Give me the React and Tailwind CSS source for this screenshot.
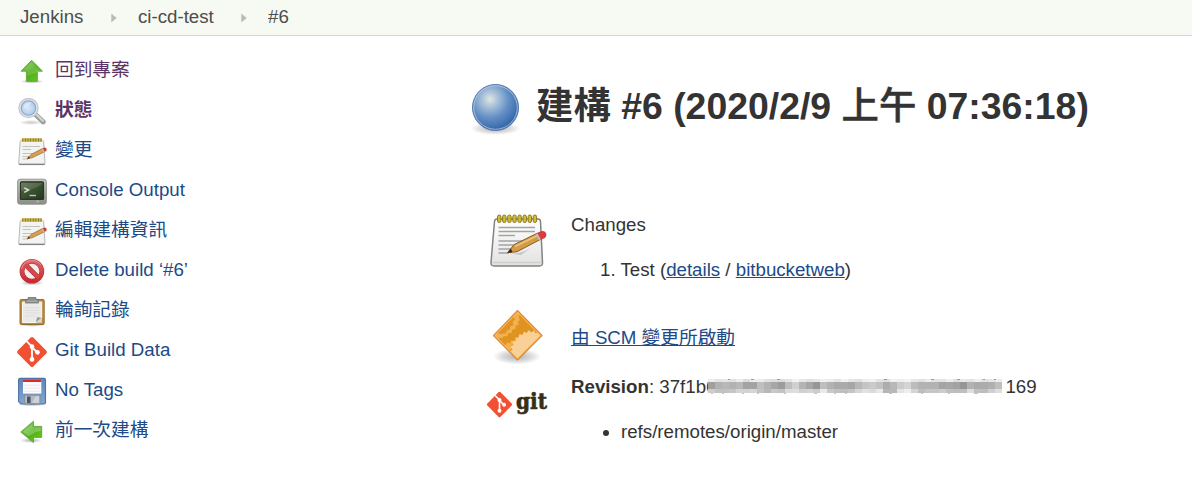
import React from "react";

function Defs() {
  return (
    <svg width="0" height="0" className="absolute">
      <defs>
        <linearGradient id="green" x1="0" y1="0" x2="1" y2="1">
          <stop offset="0" stopColor="#8fd65a" />
          <stop offset="0.5" stopColor="#4fae1c" />
          <stop offset="1" stopColor="#6bcb18" />
        </linearGradient>
        <linearGradient id="paper" x1="0" y1="0" x2="0" y2="1">
          <stop offset="0" stopColor="#ffffff" />
          <stop offset="1" stopColor="#e2e2e2" />
        </linearGradient>
        <linearGradient id="metal" x1="0" y1="0" x2="0" y2="1">
          <stop offset="0" stopColor="#c4c6c1" />
          <stop offset="1" stopColor="#8c8e88" />
        </linearGradient>
        <linearGradient id="screen" x1="0" y1="0" x2="1" y2="1">
          <stop offset="0" stopColor="#5a6e4c" />
          <stop offset="0.5" stopColor="#3a5132" />
          <stop offset="1" stopColor="#22361d" />
        </linearGradient>
        <linearGradient id="red" x1="0" y1="0" x2="0" y2="1">
          <stop offset="0" stopColor="#e06264" />
          <stop offset="1" stopColor="#cc2a2e" />
        </linearGradient>
        <linearGradient id="floppy" x1="0" y1="0" x2="0" y2="1">
          <stop offset="0" stopColor="#5c87bd" />
          <stop offset="1" stopColor="#84a6d0" />
        </linearGradient>
        <radialGradient id="glass" cx="0.45" cy="0.5" r="0.6">
          <stop offset="0" stopColor="#dbe8f6" />
          <stop offset="1" stopColor="#a9c6e8" />
        </radialGradient>
        <radialGradient id="ball" cx="0.38" cy="0.32" r="0.68">
          <stop offset="0" stopColor="#e2e6de" />
          <stop offset="0.2" stopColor="#b4c8dc" />
          <stop offset="0.6" stopColor="#638fc6" />
          <stop offset="1" stopColor="#3466a8" />
        </radialGradient>
        <radialGradient id="shadow">
          <stop offset="0" stopColor="#000" stopOpacity="0.3" />
          <stop offset="0.6" stopColor="#000" stopOpacity="0.14" />
          <stop offset="1" stopColor="#000" stopOpacity="0" />
        </radialGradient>
      </defs>
    </svg>
  );
}

function UpIcon() {
  return (
    <svg viewBox="0 0 32 32" className="size-8">
      <ellipse cx="16" cy="25.500" rx="12" ry="2" fill="url(#shadow)" />
      <path d="M15.700 4.300 26.500 15.200H21.400V25.300H10.400V15.200H5Z" fill="url(#green)" stroke="#5fa83a" strokeWidth="0.900" strokeLinejoin="round" />
      <path d="M15.700 6.200 7.800 14.300H11.400V20C15 19 18 17 22 16.500L23.800 14.300Z" fill="#fff" opacity="0.150" />
    </svg>
  );
}

function BackIcon() {
  return (
    <svg viewBox="0 0 32 32" className="size-8">
      <ellipse cx="15" cy="24.500" rx="11" ry="2.500" fill="url(#shadow)" />
      <path d="M4.800 16 17.500 5.200V10.400H25.700V21.400H17.500V26.600Z" fill="url(#green)" stroke="#5fa83a" strokeWidth="0.900" strokeLinejoin="round" />
      <path d="M7 15.500 16.600 7.400V11.300H24.800V15C18 15 17 19 12 20Z" fill="#fff" opacity="0.250" />
    </svg>
  );
}

function SearchIcon() {
  return (
    <svg viewBox="0 0 32 32" className="size-8">
      <ellipse cx="15" cy="26.500" rx="12" ry="2.500" fill="url(#shadow)" opacity="0.700" />
      <path d="M20 19 27.300 25.800" stroke="#999b9d" strokeWidth="5" strokeLinecap="round" />
      <path d="M20.500 18.600 27 24.800" stroke="#d0d1d2" strokeWidth="2.400" strokeLinecap="round" />
      <circle cx="12.500" cy="12" r="9.500" fill="#e9ecee" stroke="#c6c8c9" strokeWidth="1.400" />
      <circle cx="12.500" cy="12" r="7.300" fill="url(#glass)" stroke="#83a5cf" strokeWidth="1.100" />
      <path d="M7.400 12.500C7 8 11 5.500 15.500 7 13 10 10 12 7.400 12.500Z" fill="#fff" opacity="0.350" />
    </svg>
  );
}

function LargePad() {
  return (
    <svg viewBox="0 0 60 60" className="size-[60px]">
      <path d="M7.500 12.500Q7.700 10 10 10H51Q53.400 10 53.500 12.500L55.500 53.500Q55.600 57 52.500 57H7Q3.800 57 4 53.500Z" fill="url(#paper)" stroke="#83847f" strokeWidth="1.500" strokeLinejoin="round" />
      <path d="M5.500 53.500H54.500" stroke="#cfcfcc" strokeWidth="1.400" />
      <g stroke="#a3a3a1" strokeWidth="1.300">
        <path d="M11.500 18.500H48M11.500 22.500H48M11.500 26.500H28M11.500 32H47M11.500 36H42M11.500 40H35M11.500 44H22" />
      </g>
      <g fill="#d5bb32" stroke="#81701a" strokeWidth="0.900">
        <rect x="10.500" y="6" width="3.400" height="7.500" rx="1.600" />
        <rect x="15.600" y="6" width="3.400" height="7.500" rx="1.600" />
        <rect x="20.700" y="6" width="3.400" height="7.500" rx="1.600" />
        <rect x="25.800" y="6" width="3.400" height="7.500" rx="1.600" />
        <rect x="30.900" y="6" width="3.400" height="7.500" rx="1.600" />
        <rect x="36" y="6" width="3.400" height="7.500" rx="1.600" />
        <rect x="41.100" y="6" width="3.400" height="7.500" rx="1.600" />
        <rect x="46.200" y="6" width="3.400" height="7.500" rx="1.600" />
      </g>
      <path d="M23 44.500Q38 45 50 35L34 46Z" fill="#777" opacity="0.300" />
      <path d="M20.500 43.700 27 35.700 50 24.300 53.300 30.500 30 42.700Z" fill="#d59a48" stroke="#7d5320" strokeWidth="0.900" strokeLinejoin="round" />
      <path d="M28 37.500 50.500 26.500" stroke="#efc47c" strokeWidth="1.500" />
      <path d="M20.500 43.700 24 39.400 25.300 43.200Z" fill="#312619" />
      <path d="M50 24.300 55 22.500Q58.800 22 59 26L58 28.500 53.300 30.500Z" fill="#e53935" stroke="#b32322" strokeWidth="0.700" />
      <path d="M48.500 25.200 50.500 24.200 53.900 30.200 51.900 31.200Z" fill="#bcbcbc" />
    </svg>
  );
}

function NotepadIcon() {
  return (
    <svg viewBox="0 0 32 32" className="size-8">
      <path d="M4.200 5.500Q4.300 4.500 5.300 4.500H26.500Q27.500 4.500 27.600 5.500L29 27.200Q29 28.700 27.600 28.700H4Q2.600 28.700 2.700 27.200Z" fill="#f3f3f2" stroke="#b0b1ae" strokeWidth="0.900" />
      <path d="M3 28.300H28.700" stroke="#7f807d" strokeWidth="1.300" />
      <path d="M6.500 10.500H24M6.500 13.500H15M6.500 17.500H23M6.500 20.500H17M6.500 23H12" stroke="#bcbcba" strokeWidth="0.900" />
      <path d="M5.800 4H25.800" stroke="#c6ae3e" strokeWidth="3.400" />
      <path d="M6.500 4H25.800" stroke="#85762c" strokeWidth="3.400" strokeDasharray="0.700 1.900" />
      <path d="M11 22.700 15 18.500 26.500 12.500 28.500 15.800 16 21.800Z" fill="#d9a054" stroke="#93662f" strokeWidth="0.700" />
      <path d="M11 22.700 13 20.600 13.800 22.200Z" fill="#3a2c1a" />
      <path d="M26.600 12.300 28.500 11.600Q30.700 11.600 30.800 13.700L30.200 15 28.600 15.900Z" fill="#dc3b35" />
      <path d="m25.700 12.900 1-.5 2 3.500-1 .5Z" fill="#c4c4c4" />
    </svg>
  );
}

function TerminalIcon() {
  return (
    <svg viewBox="0 0 32 32" className="size-8">
      <rect x="1.600" y="3.200" width="28.800" height="25" rx="2.500" fill="url(#metal)" stroke="#8c8e87" strokeWidth="0.900" />
      <rect x="4.500" y="5.800" width="23" height="17.600" rx="1" fill="url(#screen)" stroke="#2b3227" strokeWidth="1.200" />
      <path d="M5 14C12 16 21 12 27 7H5Z" fill="#fff" opacity="0.130" />
      <path d="m8.300 11.800 4.200 2.300-4.200 2.300" fill="none" stroke="#dbe3d5" strokeWidth="1.500" />
      <path d="M13.500 19.500H20" stroke="#bdc9b6" strokeWidth="1.400" />
      <circle cx="21.800" cy="25.500" r="0.900" fill="#b4e04c" />
    </svg>
  );
}

function StopIcon() {
  return (
    <svg viewBox="0 0 32 32" className="size-8">
      <ellipse cx="16" cy="27" rx="12" ry="2.500" fill="url(#shadow)" />
      <circle cx="15.900" cy="15.200" r="9.900" fill="#f3efee" stroke="#b8383b" strokeWidth="4.800" />
      <path d="m9.500 8.700 13 13" stroke="#b8383b" strokeWidth="4.800" />
      <circle cx="15.900" cy="15.200" r="9.900" fill="none" stroke="url(#red)" strokeWidth="3.600" />
      <path d="m9.500 8.700 13 13" stroke="#d4474a" strokeWidth="3.600" />
      <path d="M5.500 13A11 11 0 0 1 25 9" fill="none" stroke="#fff" opacity="0.300" strokeWidth="1" />
    </svg>
  );
}

function ClipboardIcon() {
  return (
    <svg viewBox="0 0 32 32" className="size-8">
      <ellipse cx="16" cy="29" rx="13" ry="1.800" fill="url(#shadow)" />
      <rect x="4" y="3.500" width="24.200" height="25" rx="1.200" fill="#bd8b3d" stroke="#8c6425" strokeWidth="0.900" />
      <path d="M6.500 6H25.700V22L20.500 26.500H6.500Z" fill="#eaeae9" stroke="#fafafa" strokeWidth="0.900" />
      <path d="M9 11.500H23M9 14.300H23M9 17H23M9 20H19" stroke="#dddddc" strokeWidth="1" />
      <path d="m25.500 21.700-5.500 4.800 1-5.300Z" fill="#989997" />
      <path d="M20 26.800H25.800V21.700Z" fill="#d8d8d7" />
      <path d="M9.500 7V4.700L12 3.200V1.500H20V3.200L22.500 4.700V7Z" fill="#8d908b" stroke="#747773" strokeWidth="0.800" />
      <path d="M10.500 5.200H21.500" stroke="#b7b9b5" strokeWidth="0.900" />
    </svg>
  );
}

function GitMark({ className }) {
  return (
    <svg viewBox="0 0 32 32" className={className}>
      <path d="M14.700 1.600Q16 .4 17.300 1.600L30.400 14.700Q31.600 16 30.400 17.300L17.300 30.400Q16 31.600 14.700 30.400L1.600 17.300Q.4 16 1.600 14.700Z" fill="#f05133" />
      <path d="m10.800 5.400 5.200 5.200V24M16 11.200 21.300 16.500" fill="none" stroke="#fff" strokeWidth="1.900" />
      <circle cx="16" cy="10.700" r="2.350" fill="#fff" />
      <circle cx="21.500" cy="16.300" r="2.350" fill="#fff" />
      <circle cx="16" cy="23.400" r="2.350" fill="#fff" />
    </svg>
  );
}

function GitIcon() {
  return <GitMark className="size-8" />;
}

function FloppyIcon() {
  return (
    <svg viewBox="0 0 32 32" className="size-8">
      <ellipse cx="16" cy="28.500" rx="14" ry="1.800" fill="url(#shadow)" />
      <path d="M2.600 3.800Q2.600 2.400 4 2.400H28Q29.500 2.400 29.500 3.800V26.500Q29.500 28 28 28H5L2.600 25.600Z" fill="url(#floppy)" stroke="#4d73a6" strokeWidth="1.100" />
      <rect x="7" y="3.600" width="18.300" height="14" fill="#fbfbfc" />
      <rect x="7" y="3.400" width="18.300" height="2.600" fill="#dc2b27" />
      <path d="M8 9.200H24M8 12.200H24M8 15.200H24" stroke="#e6e7ea" strokeWidth="0.900" />
      <rect x="8.500" y="19.200" width="15.500" height="8.500" fill="#b7bbbf" stroke="#7b8b9b" strokeWidth="0.800" />
      <rect x="11" y="20.500" width="3.600" height="6.500" fill="#4c5560" />
      <path d="m16 27 4-7h3v7Z" fill="#d9dbdd" opacity="0.700" />
    </svg>
  );
}

function BallIcon() {
  return (
    <svg viewBox="0 0 64 64" className="size-16">
      <ellipse cx="31.500" cy="50.500" rx="25" ry="6.500" fill="url(#shadow)" />
      <circle cx="31.500" cy="29.500" r="23" fill="url(#ball)" stroke="#5377aa" strokeWidth="1" />
      <circle cx="31.500" cy="29.500" r="21.800" fill="none" stroke="#b5cbe6" strokeWidth="1" opacity="0.800" />
    </svg>
  );
}

function GearDiamondIcon() {
  return (
    <svg viewBox="0 0 60 60" className="size-[60px]">
      <ellipse cx="30" cy="49.500" rx="24" ry="8" fill="url(#shadow)" />
      <path d="M30.500 3.500 55 28.500 30.500 53 6.500 28.500Z" fill="#e0931f" />
      <path d="M25.500 8.500 30.500 3.500 33.500 6.500 31.500 10 33 13 31 14.500 31.500 18 28.500 18.500 28.500 22 25.500 22.500 24.500 26 21.500 26 20 29.500 17 29 15 31.500 12.500 30.500 10.500 32.500 6.500 28.500 9 26Q22 24 25.500 8.500Z" fill="#f3b04e" />
      <path d="M25.500 9 9.500 25.800Q13 28 16 26.500L19 26.500 19.500 23.500 23 22.500 23 19.500 26.500 18 25.500 15 28 12.500Z" fill="#e0931f" />
      <path d="M17.500 39.500 20 35.500 23 36.500 24 33.500 27.500 33.500 27 37 24 38.500 25 42 21.500 43.500Z" fill="#f3b04e" />
      <path d="M54.500 28.500 30.500 52.500 23 44.500 25.500 42.500 23.500 39.500 26.500 38 25.500 34.500 28.500 34 28.500 30.500 31.500 30.500 32.500 27 35.500 28 37 24.500 39.500 26 42 23 44 25.500 47 23.500 48.500 26.500 51 25Z" fill="#f9d196" />
      <path d="M30.500 4.800 53.700 28.500 30.500 51.700 7.800 28.500Z" fill="none" stroke="#f6bd6c" strokeWidth="1.200" />
      <path d="M30.500 3.500 55 28.500 30.500 53 6.500 28.500Z" fill="none" stroke="#e08a34" strokeWidth="1.100" strokeLinejoin="round" />
    </svg>
  );
}

const tasks = [
  { Icon: UpIcon, label: "回到專案", style: "text-[#5c3566]" },
  { Icon: SearchIcon, label: "狀態", style: "font-bold text-[#5c3566]" },
  { Icon: NotepadIcon, label: "變更", style: "text-[#204a87]" },
  { Icon: TerminalIcon, label: "Console Output", style: "text-[#204a87]" },
  { Icon: NotepadIcon, label: "編輯建構資訊", style: "text-[#204a87]" },
  { Icon: StopIcon, label: "Delete build ‘#6’", style: "text-[#204a87]" },
  { Icon: ClipboardIcon, label: "輪詢記錄", style: "text-[#204a87]" },
  { Icon: GitIcon, label: "Git Build Data", style: "text-[#204a87]" },
  { Icon: FloppyIcon, label: "No Tags", style: "text-[#204a87]" },
  { Icon: BackIcon, label: "前一次建構", style: "text-[#204a87]" },
];

const maskTop = [160, 178, 184, 178, 184, 163, 163, 190, 178, 166, 156, 190, 208, 180, 166, 150, 190, 178, 170, 170, 166, 184, 196, 202, 194, 172, 184, 204, 212, 188, 178, 178, 178, 164, 166, 162, 150, 178, 170, 172, 176, 192];
const maskBottom = [204, 194, 194, 198, 212, 210, 214, 196, 184, 200, 194, 220, 222, 208, 212, 204, 234, 200, 194, 190, 196, 214, 226, 218, 232, 182, 184, 228, 238, 212, 190, 198, 198, 204, 192, 190, 190, 222, 192, 190, 208, 222];
const maskLight = [238, 228, 230, 226, 236, 220, 238, 236, 226, 222, 220, 228, 242, 232, 224, 230, 240, 236, 228, 242, 230, 224, 238, 240, 228, 222, 240, 238, 242, 230, 226, 236, 226, 228, 238, 222, 232, 228, 238, 226, 230, 236];

function RedactedHash() {
  return (
    <svg width="297" height="15" viewBox="0 0 297 15" shapeRendering="crispEdges" className="-ml-[3px] mt-0.5 shrink-0">
      {maskTop.map((v, i) => (
        <g key={i}>
          <rect x={i * 7 + 1} y="0" width="7" height="3" fill={`rgb(${maskLight[i]},${maskLight[i]},${maskLight[i]})`} />
          <rect x={i * 7 + 1} y="3" width="7" height="7" fill={`rgb(${v},${v},${v})`} />
          <rect x={i * 7 + 1} y="10" width="7" height="4" fill={`rgb(${maskBottom[i]},${maskBottom[i]},${maskBottom[i]})`} />
        </g>
      ))}
      <path d="M21 0h2v1h-2zM44 0h3v1h-3zM70 0h3v1h-3zM177 0h3v1h-3zM224 0h3v1h-3zM250 0h3v1h-3zM276 0h2v1h-2zM287 0h2v1h-2z" fill="#999" />
      <path d="M4 14h2v1h-2zM15 14h2v1h-2zM35 14h2v1h-2zM50 14h2v1h-2zM77 14h2v1h-2zM107 14h3v1h-3zM127 14h2v1h-2zM138 14h2v1h-2zM182 14h3v1h-3zM214 14h2v1h-2zM241 14h2v1h-2zM267 14h4v1h-4z" fill="#c6c6c6" />
    </svg>
  );
}

function Separator() {
  return (
    <svg viewBox="0 0 6 10" className="h-2.5 w-1.5 shrink-0">
      <path d="M0.300 0.500 5.700 5 0.300 9.500Z" fill="#b9bbb8" />
    </svg>
  );
}

export default function App() {
  return (
    <div className="flex h-[495px] w-[1192px] flex-col overflow-hidden bg-white font-['Liberation_Sans','Noto_Sans_CJK_TC',sans-serif] text-[18.7px] text-[#333] whitespace-nowrap">
      <Defs />
      <nav className="flex h-9 shrink-0 items-center border-b border-[#d3d7cf] bg-[#f6faf2] pl-5 leading-[34px] text-[#4d4d4d]">
        <span className="w-[91px] shrink-0 pb-0.5">Jenkins</span>
        <Separator />
        <span className="ml-[21px] w-[103px] shrink-0 pb-0.5">ci-cd-test</span>
        <Separator />
        <span className="ml-[21px] pb-0.5">#6</span>
      </nav>
      <div className="flex grow">
        <aside className="w-[471px] shrink-0 pt-3.5 pl-4">
          {tasks.map(({ Icon, label, style }) => (
            <a key={label} className={`flex h-10 items-start gap-[7px] leading-10 ${style}`}>
              <span className="mt-1.5 size-8 shrink-0">
                <Icon />
              </span>
              {label}
            </a>
          ))}
        </aside>
        <main className="grow">
          <h1 className="flex h-[150px] items-start pt-10 text-[37.4px] leading-[60px] font-bold">
            <span className="-ml-[7px] w-[72px] shrink-0 pt-0.5">
              <BallIcon />
            </span>
            <span>
              建構 #6 (2020/2/9 <span className="font-medium [-webkit-text-stroke:0.5px_#333]">上午</span> 07:36:18)
            </span>
          </h1>
          <section className="flex h-[120px] gap-6 pl-4">
            <span className="mt-[23px] size-[60px] shrink-0">
              <LargePad />
            </span>
            <div className="pt-[26px] leading-[26px]">
              <p>Changes</p>
              <p className="mt-[19px] pl-[29px]">
                1. Test (<a className="text-[#204a87] underline">details</a> / <a className="text-[#204a87] underline">bitbucketweb</a>)
              </p>
            </div>
          </section>
          <section className="flex h-[60px] gap-6 pl-4">
            <span className="mt-px size-[60px] shrink-0">
              <GearDiamondIcon />
            </span>
            <a className="pt-[19px] leading-[26px] text-[#204a87] underline">由 SCM 變更所啟動</a>
          </section>
          <section className="flex gap-6 pl-4">
            <div className="flex h-[60px] w-[60px] shrink-0 items-start pt-[25px]">
              <GitMark className="-ml-px size-[27px] shrink-0" />
              <svg viewBox="0 0 34 36" className="-mt-1 h-9 w-[34px] shrink-0 overflow-visible">
                <text x="3" y="22" textLength="31" lengthAdjust="spacingAndGlyphs" strokeWidth="0.700" className="fill-[#362f14] stroke-[#362f14] font-['DejaVu_Serif',serif] text-[23px] font-bold">git</text>
              </svg>
            </div>
            <div className="pt-2 leading-[26px]">
              <div className="flex">
                <span><b>Revision</b>: 37f1b6</span>
                <span className="-ml-[6px] flex items-start pt-[3px] pr-px"><RedactedHash /></span>
                <span>169</span>
              </div>
              <ul className="mt-[19px] flex items-center pl-8">
                <li className="flex items-center gap-[12px]">
                  <span className="mt-0.5 size-1.5 rounded-full bg-[#333]" />
                  refs/remotes/origin/master
                </li>
              </ul>
            </div>
          </section>
        </main>
      </div>
    </div>
  );
}
